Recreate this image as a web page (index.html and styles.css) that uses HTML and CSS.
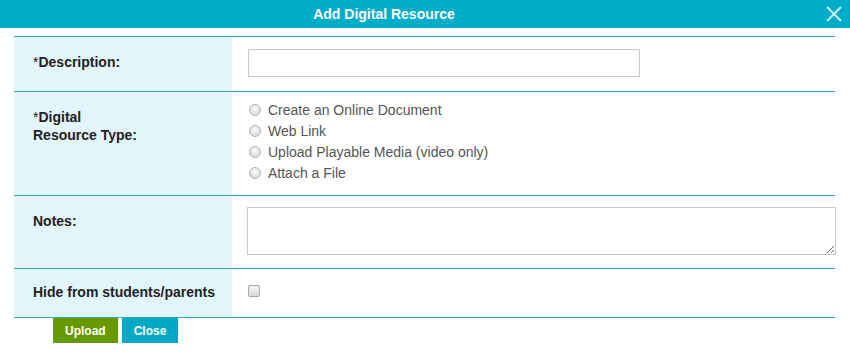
FILE: index.html
```html
<!DOCTYPE html>
<html lang="en">
<head>
    <meta charset="UTF-8">
    <meta name="viewport" content="width=device-width, initial-scale=1.0">
    <title>Add Digital Resource</title>
    <link rel="stylesheet" href="styles.css">
</head>
<body>
    <div class="dialog">
        <div class="dialog-header">
            <span class="dialog-title">Add Digital Resource</span>
            <button class="close-x" type="button" aria-label="Close">
                <svg width="18" height="18" viewBox="0 0 18 18">
                    <path d="M2 2 L16 16 M16 2 L2 16" stroke="#c9eff6" stroke-width="2" fill="none"/>
                </svg>
            </button>
        </div>

        <div class="dialog-body">
            <table class="form-table">
                <tr class="row-desc">
                    <td class="label"><span class="req">*</span>Description:</td>
                    <td class="value"><input type="text" class="text-input"></td>
                </tr>
                <tr class="row-type">
                    <td class="label"><span class="req">*</span>Digital<br>Resource Type:</td>
                    <td class="value">
                        <label class="radio-line"><input type="radio" name="rtype"> Create an Online Document</label>
                        <label class="radio-line"><input type="radio" name="rtype"> Web Link</label>
                        <label class="radio-line"><input type="radio" name="rtype"> Upload Playable Media (video only)</label>
                        <label class="radio-line"><input type="radio" name="rtype"> Attach a File</label>
                    </td>
                </tr>
                <tr class="row-notes">
                    <td class="label">Notes:</td>
                    <td class="value"><textarea class="notes"></textarea></td>
                </tr>
                <tr class="row-hide">
                    <td class="label">Hide from students/parents</td>
                    <td class="value"><input type="checkbox" class="check"></td>
                </tr>
            </table>

            <div class="actions">
                <button class="btn btn-upload" type="button">Upload</button>
                <button class="btn btn-close" type="button">Close</button>
            </div>
        </div>
    </div>
</body>
</html>
```

FILE: styles.css
```css
body {
    font-family: Arial, "Liberation Sans", sans-serif;
    background-color: #fff;
    margin: 0;
    padding: 0;
}

.dialog {
    width: 850px;
}

.dialog-header {
    position: relative;
    height: 28px;
    background-color: #00adc9;
    text-align: center;
}

.dialog-title {
    display: inline-block;
    line-height: 28px;
    font-size: 14px;
    font-weight: bold;
    color: #fff;
    margin-left: -82px;
}

.close-x {
    position: absolute;
    right: 7px;
    top: 5px;
    padding: 0;
    border: none;
    background: none;
    cursor: pointer;
}

.close-x svg {
    display: block;
}

.dialog-body {
    padding-top: 8px;
}

.form-table {
    margin-left: 14px;
    width: 821px;
    border-collapse: collapse;
    table-layout: fixed;
}

.form-table tr {
    border-top: 1px solid #36a6b6;
    border-bottom: 1px solid #36a6b6;
}

.form-table td {
    vertical-align: top;
    padding: 0;
    box-sizing: border-box;
}

.label {
    width: 218px;
    background-color: #e2f5fb;
    padding: 16px 0 0 19px !important;
    font-size: 14px;
    font-weight: bold;
    line-height: 18px;
    color: #222;
}

.req {
    font-weight: normal;
}

.value {
    padding-left: 16px !important;
}

.row-desc {
    height: 55px;
}

.row-desc .value {
    padding-top: 12px !important;
}

.text-input {
    display: block;
    width: 392px;
    height: 28px;
    box-sizing: border-box;
    border: 1px solid #c8c8c8;
    margin: 0;
}

.row-type {
    height: 104px;
}

.row-type .value {
    padding-top: 7px !important;
}

.radio-line {
    display: flex;
    align-items: center;
    height: 21px;
    font-size: 14px;
    color: #555;
}

.radio-line input {
    appearance: none;
    width: 12px;
    height: 12px;
    margin: 0 7px 0 1px;
    border: 1px solid #b4b4b4;
    border-radius: 50%;
    background: radial-gradient(circle at 50% 35%, #fafafa, #d2d2d2);
    box-sizing: border-box;
}

.row-notes {
    height: 73px;
}

.row-notes .value {
    padding-left: 15px !important;
    padding-top: 11px !important;
}

.notes {
    display: block;
    width: 589px;
    height: 48px;
    box-sizing: border-box;
    border: 1px solid #c8c8c8;
    margin: 0;
    resize: vertical;
}

.row-hide {
    height: 49px;
}

.row-hide .label {
    padding-top: 14px !important;
}

.row-hide .value {
    padding-top: 16px !important;
}

.check {
    appearance: none;
    display: block;
    width: 12px;
    height: 12px;
    margin: 0;
    border: 1px solid #a8a8a8;
    border-radius: 2px;
    background: linear-gradient(#f6f6f6, #d8d8d8);
    box-sizing: border-box;
}

.actions {
    padding-left: 53px;
    display: flex;
    gap: 4px;
}

.btn {
    height: 25px;
    padding: 0 12px;
    border: none;
    font-family: Arial, "Liberation Sans", sans-serif;
    font-size: 12px;
    font-weight: bold;
    color: #fff;
    cursor: pointer;
}

.btn-upload {
    background-color: #679a00;
}

.btn-close {
    background-color: #00aac6;
}
```
